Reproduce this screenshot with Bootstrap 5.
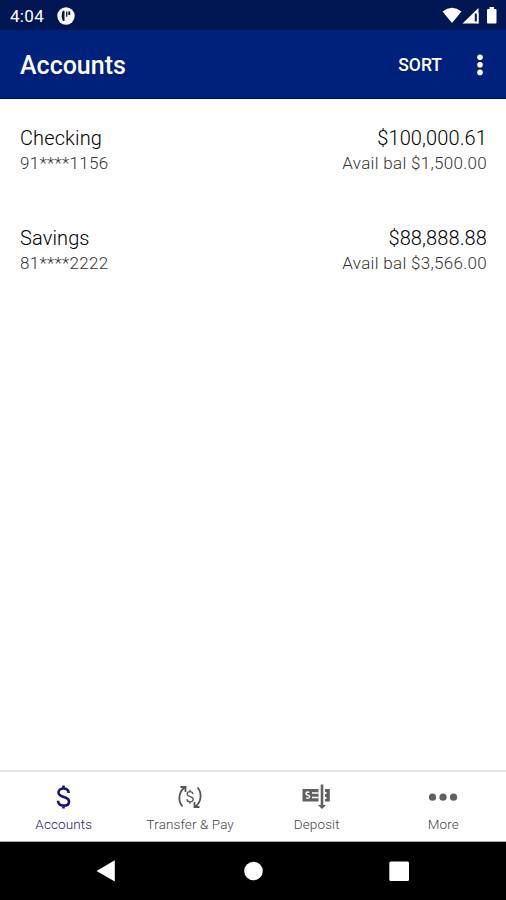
<!DOCTYPE html>
<html lang="en">
<head>
<meta charset="utf-8">
<meta name="viewport" content="width=device-width, initial-scale=1">
<title>Accounts</title>
<link href="https://cdn.jsdelivr.net/npm/bootstrap@5.3.0/dist/css/bootstrap.min.css" rel="stylesheet">
<style>
body{font-family:Roboto,"Liberation Sans",sans-serif;background:#fff;overflow:hidden}
svg{display:block;flex:none}
.screen{width:506px;height:900px}
.status{height:30px;background:#001753;padding:1px 8px 0 10px}
.clock{font-size:17px;line-height:30px;font-weight:400;letter-spacing:.3px;width:47px}
.appbar{height:69px;background:#00217b;border-bottom:1px solid #00105f;padding:2px 22px 0 20px}
.title{font-size:25px;line-height:30px;font-weight:500;padding-top:2px}
.sort{font-size:17.5px;line-height:24px;font-weight:500;margin-right:34px}
.accounts{padding:25px 19px 0 20px}
.account{height:100px}
.line1{font-size:20px;line-height:28px;font-weight:300;color:#000;letter-spacing:.12px}
.line2{font-size:17px;line-height:22px;font-weight:300;color:#333;letter-spacing:.3px}
.tabs{height:72px;border-top:2px solid #e4e4e4;border-bottom:1px solid #aaa}
.tab{font-size:13.5px;line-height:18px;font-weight:300;color:#444;letter-spacing:.1px;padding-top:9px}
.tab svg{margin-bottom:2px}
.tab span{padding-left:1px}
.tab.current{color:#1a1768}
.sysnav{height:58px;background:#000}
</style>
</head>
<body>
<div class="screen d-flex flex-column mx-auto">
  <header>
    <div class="status d-flex align-items-center text-white">
      <span class="clock">4:04</span>
      <svg width="18" height="18" viewBox="0 0 18 18"><circle cx="9" cy="9" r="8.700" fill="#fff"/><path d="M5.800 3.800h1.700v10.100H5.800q-2.300-5 0-10.100zM9.100 4.500h1.300v5.200H9.100zM11.300 4.500h1.900v3.500h-1.900z" fill="#001753"/></svg>
      <svg class="ms-auto" width="56" height="20" viewBox="0 0 56 20" fill="#fff"><path d="M.5 5.400Q10 -1.800 19.500 5.400L10 17z"/><path d="M20.500 17.500L36.500 2V17.500z"/><path d="M32.800 7.500h2v8h-2z" fill="#001753"/><path d="M35 7h1.500v10.500H35z"/><path d="M47.500 1h4.500v2h1.500q1 0 1 1v12.500q0 1-1 1h-7.500q-1 0-1-1V4q0-1 1-1h1.500z"/></svg>
    </div>
    <nav class="appbar d-flex align-items-center text-white">
      <span class="title me-auto">Accounts</span>
      <span class="sort">SORT</span>
      <svg width="8" height="22" viewBox="0 0 8 22" fill="#fff"><circle cx="4" cy="3.200" r="2.800"/><circle cx="4" cy="10.800" r="2.800"/><circle cx="4" cy="18.400" r="2.800"/></svg>
    </nav>
  </header>
  <main class="accounts flex-grow-1">
    <div class="account d-flex justify-content-between">
      <div><div class="line1">Checking</div><div class="line2">91****1156</div></div>
      <div class="text-end"><div class="line1">$100,000.61</div><div class="line2">Avail bal $1,500.00</div></div>
    </div>
    <div class="account d-flex justify-content-between">
      <div><div class="line1">Savings</div><div class="line2">81****2222</div></div>
      <div class="text-end"><div class="line1">$88,888.88</div><div class="line2">Avail bal $3,566.00</div></div>
    </div>
  </main>
  <nav class="tabs row g-0 text-center">
    <div class="tab current col d-flex flex-column align-items-center">
      <svg width="32" height="32" viewBox="0 0 32 32" fill="none" stroke="#17156e" stroke-width="2.600"><path d="M21.700 12C21.500 9 19.500 7.500 16.500 7.500c-3 0-5 1.700-5 4.100 0 5.700 10.500 3.200 10.500 8.800 0 2.600-2.200 4.200-5.400 4.200-3.500 0-5.500-1.900-5.600-4.800M16.500 4.500v3M16.500 24.500v3"/></svg>
      <span>Accounts</span>
    </div>
    <div class="tab col d-flex flex-column align-items-center">
      <svg width="32" height="32" viewBox="0 0 32 32" fill="none" stroke="#555" stroke-width="1.800"><path d="M8.500 25.500C4 20.500 4.200 11.500 10.500 6.500M6.500 6h5v5M23.500 6.500c4.500 5 4.300 14-2 19M25.500 26h-5v-5"/><path d="M19 13c-.4-1.600-1.500-2.300-3-2.300-1.700 0-2.900.9-2.900 2.400 0 3.300 6.100 1.900 6.100 5.200 0 1.600-1.300 2.500-3.100 2.500-1.900 0-3.100-1-3.200-2.700M16 8.800v2M16 20.800v2" stroke-width="1.300"/></svg>
      <span>Transfer &amp; Pay</span>
    </div>
    <div class="tab col d-flex flex-column align-items-center">
      <svg width="32" height="32" viewBox="0 0 32 32"><path d="M2.500 8h16v12.500h-16zM25 8h4.800v12.500H25v-2.500h1.500v-2H25v-3h1.500v-2H25z" fill="#606060"/><path d="M9.300 11.300c-3.500-1-4.500 2.200-1.500 2.800 3.200.7 2 4-1.800 2.700M12 12h6.500M12 16.500h6.500" fill="none" stroke="#fff" stroke-width="1.400"/><path d="M20.700 3.500h2.600V24h2.800L22 28l-4.200-4h2.900z" fill="#606060"/></svg>
      <span>Deposit</span>
    </div>
    <div class="tab col d-flex flex-column align-items-center">
      <svg width="32" height="32" viewBox="0 0 32 32" fill="#606060"><circle cx="5.500" cy="16.200" r="3.600"/><circle cx="16" cy="16.200" r="3.600"/><circle cx="26.500" cy="16.200" r="3.600"/></svg>
      <span>More</span>
    </div>
  </nav>
  <footer class="sysnav">
    <svg width="506" height="58" viewBox="0 0 506 58" fill="#fff"><path d="M96.500 29L114.800 18.300V39.500z"/><circle cx="253.500" cy="29" r="9.300"/><rect x="389.300" y="19.500" width="19.700" height="19.500" rx="1.500"/></svg>
  </footer>
</div>
<script src="https://cdn.jsdelivr.net/npm/bootstrap@5.3.0/dist/js/bootstrap.bundle.min.js"></script>
</body>
</html>
